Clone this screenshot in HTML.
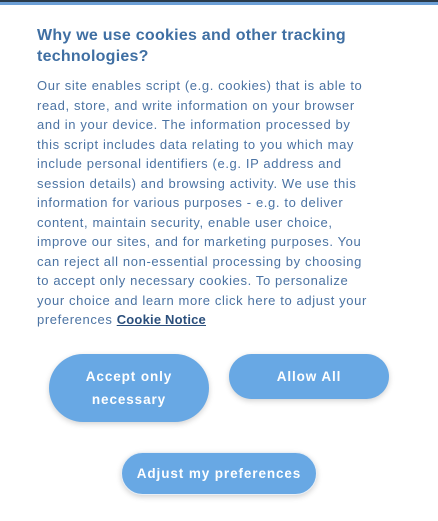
<!DOCTYPE html>
<html><head><style>
html,body{margin:0;padding:0;width:438px;height:521px;overflow:hidden;background:#fff;font-family:"Liberation Sans",sans-serif;}
.top{position:absolute;left:0;top:0;width:438px;height:2px;background:#2a3a4a;}
.line{position:absolute;left:0;top:2px;width:438px;height:3px;background:#6c9fd6;}
h1{position:absolute;left:37px;top:25px;width:380px;margin:0;font-size:16px;line-height:21px;font-weight:bold;color:#3f6fa3;letter-spacing:0.25px;}
p{position:absolute;left:37px;top:76px;width:400px;margin:0;font-size:13px;line-height:19.5px;color:#4b73a3;white-space:nowrap;letter-spacing:0.62px;}
p b{color:#2b4f7c;text-decoration:underline;letter-spacing:0.2px;}
.btn{position:absolute;background:#68a8e4;color:#fff;font-weight:bold;font-size:13.5px;letter-spacing:0.9px;text-align:center;box-shadow:0 2px 6px rgba(0,0,0,0.18);display:flex;align-items:center;justify-content:center;line-height:23px;}
</style></head><body>
<div class="top"></div><div class="line"></div>
<h1>Why we use cookies and other tracking technologies?</h1>
<p>Our site enables script (e.g. cookies) that is able to<br>read, store, and write information on your browser<br>and in your device. The information processed by<br>this script includes data relating to you which may<br>include personal identifiers (e.g. IP address and<br>session details) and browsing activity. We use this<br>information for various purposes - e.g. to deliver<br>content, maintain security, enable user choice,<br>improve our sites, and for marketing purposes. You<br>can reject all non-essential processing by choosing<br>to accept only necessary cookies. To personalize<br>your choice and learn more click here to adjust your<br>preferences <b>Cookie Notice</b></p>
<div class="btn" style="left:49px;top:354px;width:160px;height:68px;border-radius:34px;">Accept only<br>necessary</div>
<div class="btn" style="left:229px;top:354px;width:160px;height:45px;border-radius:23px;">Allow All</div>
<div class="btn" style="left:121px;top:452px;width:196px;height:43px;border-radius:22px;border:1px solid #e8eef5;box-sizing:border-box;">Adjust my preferences</div>
</body></html>
